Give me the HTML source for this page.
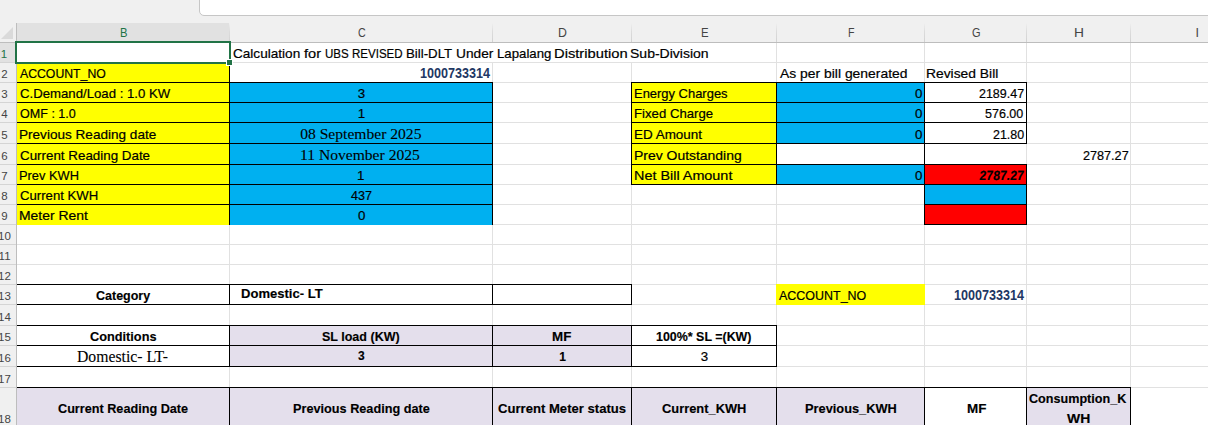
<!DOCTYPE html><html><head><meta charset='utf-8'><style>
html,body{margin:0;padding:0;}body{width:1208px;height:425px;position:relative;overflow:hidden;background:#f0f0f0;font-family:"Liberation Sans", sans-serif;}
.a{position:absolute;}.t{position:absolute;white-space:pre;transform-origin:0 0;}
</style></head><body>
<div class='a' style='left:199px;top:-10px;width:1100px;height:26px;background:#fff;border:1px solid #c6c6c6;border-radius:5px;box-sizing:border-box;'></div>
<div class='a' style='left:0;top:23px;width:1208px;height:19px;background:#f0f0f0'></div>
<div class='a' style='left:17px;top:23px;width:212px;height:18px;background:#e1e1e1'></div>
<div class='a' style='left:16px;top:23px;width:1px;height:19px;background:linear-gradient(#f0f0f0,#dcdcdc 45%,#d2d2d2)'></div>
<div class='a' style='left:229px;top:23px;width:1px;height:19px;background:linear-gradient(#f0f0f0,#dcdcdc 45%,#d2d2d2)'></div>
<div class='a' style='left:492px;top:23px;width:1px;height:19px;background:linear-gradient(#f0f0f0,#dcdcdc 45%,#d2d2d2)'></div>
<div class='a' style='left:631px;top:23px;width:1px;height:19px;background:linear-gradient(#f0f0f0,#dcdcdc 45%,#d2d2d2)'></div>
<div class='a' style='left:776px;top:23px;width:1px;height:19px;background:linear-gradient(#f0f0f0,#dcdcdc 45%,#d2d2d2)'></div>
<div class='a' style='left:924px;top:23px;width:1px;height:19px;background:linear-gradient(#f0f0f0,#dcdcdc 45%,#d2d2d2)'></div>
<div class='a' style='left:1026px;top:23px;width:1px;height:19px;background:linear-gradient(#f0f0f0,#dcdcdc 45%,#d2d2d2)'></div>
<div class='a' style='left:1130px;top:23px;width:1px;height:19px;background:linear-gradient(#f0f0f0,#dcdcdc 45%,#d2d2d2)'></div>
<div class='a' style='left:0;top:42px;width:1208px;height:1px;background:#bdbdbd'></div>
<svg class='a' style='left:0;top:23px' width='16' height='19'><polygon points='13,4 13,16 1,16' fill='#dadada'/></svg>
<div class='a' style='left:0;top:43px;width:16px;height:400px;background:#f0f0f0'></div>
<div class='a' style='left:0;top:43px;width:16px;height:19px;background:#e1e1e1'></div>
<div class='a' style='left:0;top:62px;width:16px;height:1px;background:#d4d4d4'></div>
<div class='a' style='left:0;top:82px;width:16px;height:1px;background:#d4d4d4'></div>
<div class='a' style='left:0;top:102px;width:16px;height:1px;background:#d4d4d4'></div>
<div class='a' style='left:0;top:122px;width:16px;height:1px;background:#d4d4d4'></div>
<div class='a' style='left:0;top:143px;width:16px;height:1px;background:#d4d4d4'></div>
<div class='a' style='left:0;top:164px;width:16px;height:1px;background:#d4d4d4'></div>
<div class='a' style='left:0;top:184px;width:16px;height:1px;background:#d4d4d4'></div>
<div class='a' style='left:0;top:204px;width:16px;height:1px;background:#d4d4d4'></div>
<div class='a' style='left:0;top:224px;width:16px;height:1px;background:#d4d4d4'></div>
<div class='a' style='left:0;top:244px;width:16px;height:1px;background:#d4d4d4'></div>
<div class='a' style='left:0;top:264px;width:16px;height:1px;background:#d4d4d4'></div>
<div class='a' style='left:0;top:284px;width:16px;height:1px;background:#d4d4d4'></div>
<div class='a' style='left:0;top:304px;width:16px;height:1px;background:#d4d4d4'></div>
<div class='a' style='left:0;top:325px;width:16px;height:1px;background:#d4d4d4'></div>
<div class='a' style='left:0;top:345px;width:16px;height:1px;background:#d4d4d4'></div>
<div class='a' style='left:0;top:366px;width:16px;height:1px;background:#d4d4d4'></div>
<div class='a' style='left:0;top:387px;width:16px;height:1px;background:#d4d4d4'></div>
<div class='a' style='left:16px;top:23px;width:1px;height:402px;background:#bdbdbd'></div>
<div class='a' style='left:17px;top:43px;width:1191px;height:382px;background:#fff'></div>
<div class='a' style='left:229px;top:43px;width:1px;height:382px;background:#e1e1e1'></div>
<div class='a' style='left:492px;top:43px;width:1px;height:382px;background:#e1e1e1'></div>
<div class='a' style='left:631px;top:43px;width:1px;height:382px;background:#e1e1e1'></div>
<div class='a' style='left:776px;top:43px;width:1px;height:382px;background:#e1e1e1'></div>
<div class='a' style='left:924px;top:43px;width:1px;height:382px;background:#e1e1e1'></div>
<div class='a' style='left:1026px;top:43px;width:1px;height:382px;background:#e1e1e1'></div>
<div class='a' style='left:1130px;top:43px;width:1px;height:382px;background:#e1e1e1'></div>
<div class='a' style='left:17px;top:62px;width:1191px;height:1px;background:#e1e1e1'></div>
<div class='a' style='left:17px;top:82px;width:1191px;height:1px;background:#e1e1e1'></div>
<div class='a' style='left:17px;top:102px;width:1191px;height:1px;background:#e1e1e1'></div>
<div class='a' style='left:17px;top:122px;width:1191px;height:1px;background:#e1e1e1'></div>
<div class='a' style='left:17px;top:143px;width:1191px;height:1px;background:#e1e1e1'></div>
<div class='a' style='left:17px;top:164px;width:1191px;height:1px;background:#e1e1e1'></div>
<div class='a' style='left:17px;top:184px;width:1191px;height:1px;background:#e1e1e1'></div>
<div class='a' style='left:17px;top:204px;width:1191px;height:1px;background:#e1e1e1'></div>
<div class='a' style='left:17px;top:224px;width:1191px;height:1px;background:#e1e1e1'></div>
<div class='a' style='left:17px;top:244px;width:1191px;height:1px;background:#e1e1e1'></div>
<div class='a' style='left:17px;top:264px;width:1191px;height:1px;background:#e1e1e1'></div>
<div class='a' style='left:17px;top:284px;width:1191px;height:1px;background:#e1e1e1'></div>
<div class='a' style='left:17px;top:304px;width:1191px;height:1px;background:#e1e1e1'></div>
<div class='a' style='left:17px;top:325px;width:1191px;height:1px;background:#e1e1e1'></div>
<div class='a' style='left:17px;top:345px;width:1191px;height:1px;background:#e1e1e1'></div>
<div class='a' style='left:17px;top:366px;width:1191px;height:1px;background:#e1e1e1'></div>
<div class='a' style='left:17px;top:387px;width:1191px;height:1px;background:#e1e1e1'></div>
<div class='a' style='left:492px;top:43px;width:1px;height:19px;background:#fff'></div>
<div class='a' style='left:631px;top:43px;width:1px;height:19px;background:#fff'></div>
<div class='a' style='left:17px;top:62px;width:213px;height:163px;background:#ffff00'></div>
<div class='a' style='left:229px;top:82px;width:264px;height:143px;background:#00b0f0'></div>
<div class='a' style='left:631px;top:82px;width:146px;height:103px;background:#ffff00'></div>
<div class='a' style='left:776px;top:82px;width:149px;height:62px;background:#00b0f0'></div>
<div class='a' style='left:776px;top:164px;width:149px;height:21px;background:#00b0f0'></div>
<div class='a' style='left:924px;top:164px;width:103px;height:21px;background:#ff0000'></div>
<div class='a' style='left:924px;top:184px;width:103px;height:21px;background:#00b0f0'></div>
<div class='a' style='left:924px;top:204px;width:103px;height:21px;background:#ff0000'></div>
<div class='a' style='left:776px;top:284px;width:149px;height:21px;background:#ffff00'></div>
<div class='a' style='left:229px;top:325px;width:403px;height:42px;background:#e4dfec'></div>
<div class='a' style='left:17px;top:387px;width:908px;height:54px;background:#e4dfec'></div>
<div class='a' style='left:1026px;top:387px;width:105px;height:54px;background:#e4dfec'></div>
<div class='a' style='left:17px;top:82px;width:476px;height:1px;background:#000'></div>
<div class='a' style='left:17px;top:102px;width:476px;height:1px;background:#000'></div>
<div class='a' style='left:17px;top:122px;width:476px;height:1px;background:#000'></div>
<div class='a' style='left:17px;top:143px;width:476px;height:1px;background:#000'></div>
<div class='a' style='left:17px;top:164px;width:476px;height:1px;background:#000'></div>
<div class='a' style='left:17px;top:184px;width:476px;height:1px;background:#000'></div>
<div class='a' style='left:17px;top:204px;width:476px;height:1px;background:#000'></div>
<div class='a' style='left:229px;top:62px;width:1px;height:163px;background:#000'></div>
<div class='a' style='left:492px;top:82px;width:1px;height:143px;background:#000'></div>
<div class='a' style='left:631px;top:82px;width:294px;height:1px;background:#000'></div>
<div class='a' style='left:631px;top:184px;width:294px;height:1px;background:#000'></div>
<div class='a' style='left:631px;top:82px;width:1px;height:103px;background:#000'></div>
<div class='a' style='left:924px;top:82px;width:1px;height:103px;background:#000'></div>
<div class='a' style='left:776px;top:82px;width:1px;height:103px;background:#000'></div>
<div class='a' style='left:631px;top:102px;width:294px;height:1px;background:#000'></div>
<div class='a' style='left:631px;top:122px;width:294px;height:1px;background:#000'></div>
<div class='a' style='left:631px;top:143px;width:294px;height:1px;background:#000'></div>
<div class='a' style='left:631px;top:164px;width:294px;height:1px;background:#000'></div>
<div class='a' style='left:924px;top:82px;width:103px;height:1px;background:#000'></div>
<div class='a' style='left:924px;top:143px;width:103px;height:1px;background:#000'></div>
<div class='a' style='left:924px;top:82px;width:1px;height:62px;background:#000'></div>
<div class='a' style='left:1026px;top:82px;width:1px;height:62px;background:#000'></div>
<div class='a' style='left:924px;top:102px;width:103px;height:1px;background:#000'></div>
<div class='a' style='left:924px;top:122px;width:103px;height:1px;background:#000'></div>
<div class='a' style='left:924px;top:143px;width:1px;height:22px;background:#000'></div>
<div class='a' style='left:924px;top:164px;width:103px;height:1px;background:#000'></div>
<div class='a' style='left:924px;top:224px;width:103px;height:1px;background:#000'></div>
<div class='a' style='left:924px;top:164px;width:1px;height:61px;background:#000'></div>
<div class='a' style='left:1026px;top:164px;width:1px;height:61px;background:#000'></div>
<div class='a' style='left:924px;top:184px;width:103px;height:1px;background:#000'></div>
<div class='a' style='left:924px;top:204px;width:103px;height:1px;background:#000'></div>
<div class='a' style='left:17px;top:284px;width:615px;height:1px;background:#000'></div>
<div class='a' style='left:17px;top:304px;width:615px;height:1px;background:#000'></div>
<div class='a' style='left:631px;top:284px;width:1px;height:21px;background:#000'></div>
<div class='a' style='left:229px;top:284px;width:1px;height:21px;background:#000'></div>
<div class='a' style='left:492px;top:284px;width:1px;height:21px;background:#000'></div>
<div class='a' style='left:17px;top:325px;width:760px;height:1px;background:#000'></div>
<div class='a' style='left:17px;top:366px;width:760px;height:1px;background:#000'></div>
<div class='a' style='left:776px;top:325px;width:1px;height:42px;background:#000'></div>
<div class='a' style='left:229px;top:325px;width:1px;height:42px;background:#000'></div>
<div class='a' style='left:492px;top:325px;width:1px;height:42px;background:#000'></div>
<div class='a' style='left:631px;top:325px;width:1px;height:42px;background:#000'></div>
<div class='a' style='left:17px;top:345px;width:760px;height:1px;background:#000'></div>
<div class='a' style='left:17px;top:387px;width:1114px;height:1px;background:#000'></div>
<div class='a' style='left:17px;top:440px;width:1114px;height:1px;background:#000'></div>
<div class='a' style='left:1130px;top:387px;width:1px;height:54px;background:#000'></div>
<div class='a' style='left:229px;top:387px;width:1px;height:54px;background:#000'></div>
<div class='a' style='left:492px;top:387px;width:1px;height:54px;background:#000'></div>
<div class='a' style='left:631px;top:387px;width:1px;height:54px;background:#000'></div>
<div class='a' style='left:776px;top:387px;width:1px;height:54px;background:#000'></div>
<div class='a' style='left:924px;top:387px;width:1px;height:54px;background:#000'></div>
<div class='a' style='left:1026px;top:387px;width:1px;height:54px;background:#000'></div>
<div class='a' style='left:15px;top:41px;width:216px;height:23px;border:2px solid #217346;box-sizing:border-box'></div>
<div class='a' style='left:227px;top:60px;width:5px;height:5px;background:#217346;border:1px solid #fff;box-sizing:content-box;margin:-1px'></div>
<div class='t' style='left:119.60px;top:25.00px;font-family:"Liberation Sans", sans-serif;font-size:12.5px;font-weight:400;font-style:normal;line-height:16px;white-space:pre;color:#217346;transform:scaleX(0.9000);'>B</div>
<div class='t' style='left:357.60px;top:25.00px;font-family:"Liberation Sans", sans-serif;font-size:12.5px;font-weight:400;font-style:normal;line-height:16px;white-space:pre;color:#444444;transform:scaleX(0.8556);'>C</div>
<div class='t' style='left:557.61px;top:25.00px;font-family:"Liberation Sans", sans-serif;font-size:12.5px;font-weight:400;font-style:normal;line-height:16px;white-space:pre;color:#444444;transform:scaleX(0.9875);'>D</div>
<div class='t' style='left:700.79px;top:25.00px;font-family:"Liberation Sans", sans-serif;font-size:12.5px;font-weight:400;font-style:normal;line-height:16px;white-space:pre;color:#444444;transform:scaleX(0.9143);'>E</div>
<div class='t' style='left:847.75px;top:25.00px;font-family:"Liberation Sans", sans-serif;font-size:12.5px;font-weight:400;font-style:normal;line-height:16px;white-space:pre;color:#444444;transform:scaleX(0.8500);'>F</div>
<div class='t' style='left:971.80px;top:25.00px;font-family:"Liberation Sans", sans-serif;font-size:12.5px;font-weight:400;font-style:normal;line-height:16px;white-space:pre;color:#444444;transform:scaleX(0.8778);'>G</div>
<div class='t' style='left:1073.60px;top:25.00px;font-family:"Liberation Sans", sans-serif;font-size:12.5px;font-weight:400;font-style:normal;line-height:16px;white-space:pre;color:#444444;transform:scaleX(1.1000);'>H</div>
<div class='t' style='left:1195.55px;top:25.00px;font-family:"Liberation Sans", sans-serif;font-size:12.5px;font-weight:400;font-style:normal;line-height:16px;white-space:pre;color:#444444;'>I</div>
<div class='t' style='left:0.70px;top:46.80px;font-family:"Liberation Sans", sans-serif;font-size:11.5px;font-weight:400;font-style:normal;line-height:15px;white-space:pre;color:#217346;'>1</div>
<div class='t' style='left:1.20px;top:66.60px;font-family:"Liberation Sans", sans-serif;font-size:11.5px;font-weight:400;font-style:normal;line-height:15px;white-space:pre;color:#444444;'>2</div>
<div class='t' style='left:1.20px;top:86.70px;font-family:"Liberation Sans", sans-serif;font-size:11.5px;font-weight:400;font-style:normal;line-height:15px;white-space:pre;color:#444444;'>3</div>
<div class='t' style='left:1.20px;top:106.70px;font-family:"Liberation Sans", sans-serif;font-size:11.5px;font-weight:400;font-style:normal;line-height:15px;white-space:pre;color:#444444;'>4</div>
<div class='t' style='left:1.20px;top:127.70px;font-family:"Liberation Sans", sans-serif;font-size:11.5px;font-weight:400;font-style:normal;line-height:15px;white-space:pre;color:#444444;'>5</div>
<div class='t' style='left:1.20px;top:148.70px;font-family:"Liberation Sans", sans-serif;font-size:11.5px;font-weight:400;font-style:normal;line-height:15px;white-space:pre;color:#444444;'>6</div>
<div class='t' style='left:1.20px;top:168.70px;font-family:"Liberation Sans", sans-serif;font-size:11.5px;font-weight:400;font-style:normal;line-height:15px;white-space:pre;color:#444444;'>7</div>
<div class='t' style='left:1.20px;top:188.70px;font-family:"Liberation Sans", sans-serif;font-size:11.5px;font-weight:400;font-style:normal;line-height:15px;white-space:pre;color:#444444;'>8</div>
<div class='t' style='left:1.20px;top:208.70px;font-family:"Liberation Sans", sans-serif;font-size:11.5px;font-weight:400;font-style:normal;line-height:15px;white-space:pre;color:#444444;'>9</div>
<div class='t' style='left:-1.90px;top:228.70px;font-family:"Liberation Sans", sans-serif;font-size:11.5px;font-weight:400;font-style:normal;line-height:15px;white-space:pre;color:#444444;'>10</div>
<div class='t' style='left:-1.40px;top:248.70px;font-family:"Liberation Sans", sans-serif;font-size:11.5px;font-weight:400;font-style:normal;line-height:15px;white-space:pre;color:#444444;'>11</div>
<div class='t' style='left:-1.90px;top:268.70px;font-family:"Liberation Sans", sans-serif;font-size:11.5px;font-weight:400;font-style:normal;line-height:15px;white-space:pre;color:#444444;'>12</div>
<div class='t' style='left:-1.90px;top:288.70px;font-family:"Liberation Sans", sans-serif;font-size:11.5px;font-weight:400;font-style:normal;line-height:15px;white-space:pre;color:#444444;'>13</div>
<div class='t' style='left:-1.90px;top:309.70px;font-family:"Liberation Sans", sans-serif;font-size:11.5px;font-weight:400;font-style:normal;line-height:15px;white-space:pre;color:#444444;'>14</div>
<div class='t' style='left:-1.90px;top:329.70px;font-family:"Liberation Sans", sans-serif;font-size:11.5px;font-weight:400;font-style:normal;line-height:15px;white-space:pre;color:#444444;'>15</div>
<div class='t' style='left:-1.90px;top:350.70px;font-family:"Liberation Sans", sans-serif;font-size:11.5px;font-weight:400;font-style:normal;line-height:15px;white-space:pre;color:#444444;'>16</div>
<div class='t' style='left:-1.90px;top:371.70px;font-family:"Liberation Sans", sans-serif;font-size:11.5px;font-weight:400;font-style:normal;line-height:15px;white-space:pre;color:#444444;'>17</div>
<div class='t' style='left:-1.90px;top:412.00px;font-family:"Liberation Sans", sans-serif;font-size:11.5px;font-weight:400;font-style:normal;line-height:15px;white-space:pre;color:#444444;'>18</div>
<div class='t' style='left:232.70px;top:45.00px;font-family:"Liberation Sans", sans-serif;font-size:13.3px;font-weight:400;font-style:normal;line-height:17px;white-space:pre;-webkit-text-stroke:0.2px #000;color:#000;transform:scaleX(1.0212);'>Calculation</div>
<div class='t' style='left:304.20px;top:45.00px;font-family:"Liberation Sans", sans-serif;font-size:13.3px;font-weight:400;font-style:normal;line-height:17px;white-space:pre;-webkit-text-stroke:0.2px #000;color:#000;transform:scaleX(1.0938);'>for</div>
<div class='t' style='left:324.73px;top:45.00px;font-family:"Liberation Sans", sans-serif;font-size:13.3px;font-weight:400;font-style:normal;line-height:17px;white-space:pre;-webkit-text-stroke:0.2px #000;color:#000;transform:scaleX(0.8692);'>UBS</div>
<div class='t' style='left:352.03px;top:45.00px;font-family:"Liberation Sans", sans-serif;font-size:13.3px;font-weight:400;font-style:normal;line-height:17px;white-space:pre;-webkit-text-stroke:0.2px #000;color:#000;transform:scaleX(0.8667);'>REVISED</div>
<div class='t' style='left:406.20px;top:45.00px;font-family:"Liberation Sans", sans-serif;font-size:13.3px;font-weight:400;font-style:normal;line-height:17px;white-space:pre;-webkit-text-stroke:0.2px #000;color:#000;transform:scaleX(0.9957);'>Bill-DLT</div>
<div class='t' style='left:455.77px;top:45.00px;font-family:"Liberation Sans", sans-serif;font-size:13.3px;font-weight:400;font-style:normal;line-height:17px;white-space:pre;-webkit-text-stroke:0.2px #000;color:#000;transform:scaleX(1.0306);'>Under</div>
<div class='t' style='left:496.91px;top:45.00px;font-family:"Liberation Sans", sans-serif;font-size:13.3px;font-weight:400;font-style:normal;line-height:17px;white-space:pre;-webkit-text-stroke:0.2px #000;color:#000;transform:scaleX(0.9943);'>Lapalang</div>
<div class='t' style='left:553.79px;top:45.00px;font-family:"Liberation Sans", sans-serif;font-size:13.3px;font-weight:400;font-style:normal;line-height:17px;white-space:pre;-webkit-text-stroke:0.2px #000;color:#000;transform:scaleX(1.1077);'>Distribution</div>
<div class='t' style='left:630.45px;top:45.00px;font-family:"Liberation Sans", sans-serif;font-size:13.3px;font-weight:400;font-style:normal;line-height:17px;white-space:pre;-webkit-text-stroke:0.2px #000;color:#000;transform:scaleX(1.0534);'>Sub-Division</div>
<div class='t' style='left:20.30px;top:65.00px;font-family:"Liberation Sans", sans-serif;font-size:13.3px;font-weight:400;font-style:normal;line-height:17px;white-space:pre;-webkit-text-stroke:0.2px #000;color:#000;transform:scaleX(0.9215);'>ACCOUNT_NO</div>
<div class='t' style='left:419.90px;top:64.00px;font-family:"Liberation Sans", sans-serif;font-size:14px;font-weight:700;font-style:normal;line-height:18px;white-space:pre;color:#1f3864;transform:scaleX(0.9000);'>1000733314</div>
<div class='t' style='left:779.50px;top:65.00px;font-family:"Liberation Sans", sans-serif;font-size:13.3px;font-weight:400;font-style:normal;line-height:17px;white-space:pre;-webkit-text-stroke:0.2px #000;color:#000;transform:scaleX(1.0451);'>As per bill generated</div>
<div class='t' style='left:926.36px;top:65.00px;font-family:"Liberation Sans", sans-serif;font-size:13.3px;font-weight:400;font-style:normal;line-height:17px;white-space:pre;-webkit-text-stroke:0.2px #000;color:#000;transform:scaleX(1.0412);'>Revised Bill</div>
<div class='t' style='left:20.30px;top:85.00px;font-family:"Liberation Sans", sans-serif;font-size:13.3px;font-weight:400;font-style:normal;line-height:17px;white-space:pre;-webkit-text-stroke:0.2px #000;color:#000;transform:scaleX(0.9914);'>C.Demand/Load : 1.0 KW</div>
<div class='t' style='left:357.85px;top:85.00px;font-family:"Liberation Sans", sans-serif;font-size:13.3px;font-weight:400;font-style:normal;line-height:17px;white-space:pre;-webkit-text-stroke:0.2px #000;color:#000;'>3</div>
<div class='t' style='left:633.93px;top:85.00px;font-family:"Liberation Sans", sans-serif;font-size:13.3px;font-weight:400;font-style:normal;line-height:17px;white-space:pre;-webkit-text-stroke:0.2px #000;color:#000;transform:scaleX(0.9737);'>Energy Charges</div>
<div class='t' style='left:915.05px;top:85.00px;font-family:"Liberation Sans", sans-serif;font-size:13.3px;font-weight:400;font-style:normal;line-height:17px;white-space:pre;-webkit-text-stroke:0.2px #000;color:#000;'>0</div>
<div class='t' style='left:978.60px;top:85.00px;font-family:"Liberation Sans", sans-serif;font-size:13.3px;font-weight:400;font-style:normal;line-height:17px;white-space:pre;-webkit-text-stroke:0.2px #000;color:#000;transform:scaleX(0.9375);'>2189.47</div>
<div class='t' style='left:20.30px;top:105.00px;font-family:"Liberation Sans", sans-serif;font-size:13.3px;font-weight:400;font-style:normal;line-height:17px;white-space:pre;-webkit-text-stroke:0.2px #000;color:#000;transform:scaleX(0.9441);'>OMF : 1.0</div>
<div class='t' style='left:357.65px;top:105.00px;font-family:"Liberation Sans", sans-serif;font-size:13.3px;font-weight:400;font-style:normal;line-height:17px;white-space:pre;-webkit-text-stroke:0.2px #000;color:#000;'>1</div>
<div class='t' style='left:633.91px;top:105.00px;font-family:"Liberation Sans", sans-serif;font-size:13.3px;font-weight:400;font-style:normal;line-height:17px;white-space:pre;-webkit-text-stroke:0.2px #000;color:#000;transform:scaleX(0.9911);'>Fixed Charge</div>
<div class='t' style='left:915.05px;top:105.00px;font-family:"Liberation Sans", sans-serif;font-size:13.3px;font-weight:400;font-style:normal;line-height:17px;white-space:pre;-webkit-text-stroke:0.2px #000;color:#000;'>0</div>
<div class='t' style='left:985.00px;top:105.00px;font-family:"Liberation Sans", sans-serif;font-size:13.3px;font-weight:400;font-style:normal;line-height:17px;white-space:pre;-webkit-text-stroke:0.2px #000;color:#000;transform:scaleX(0.9415);'>576.00</div>
<div class='t' style='left:19.28px;top:126.00px;font-family:"Liberation Sans", sans-serif;font-size:13.3px;font-weight:400;font-style:normal;line-height:17px;white-space:pre;-webkit-text-stroke:0.2px #000;color:#000;transform:scaleX(1.0201);'>Previous Reading date</div>
<div class='t' style='left:300.20px;top:123.70px;font-family:"Liberation Serif", serif;font-size:15.6px;font-weight:400;font-style:normal;line-height:20px;white-space:pre;-webkit-text-stroke:0.1px #000;color:#000;'>08 September 2025</div>
<div class='t' style='left:633.89px;top:126.00px;font-family:"Liberation Sans", sans-serif;font-size:13.3px;font-weight:400;font-style:normal;line-height:17px;white-space:pre;-webkit-text-stroke:0.2px #000;color:#000;transform:scaleX(1.0119);'>ED Amount</div>
<div class='t' style='left:915.05px;top:126.00px;font-family:"Liberation Sans", sans-serif;font-size:13.3px;font-weight:400;font-style:normal;line-height:17px;white-space:pre;-webkit-text-stroke:0.2px #000;color:#000;'>0</div>
<div class='t' style='left:992.70px;top:126.00px;font-family:"Liberation Sans", sans-serif;font-size:13.3px;font-weight:400;font-style:normal;line-height:17px;white-space:pre;-webkit-text-stroke:0.2px #000;color:#000;transform:scaleX(0.9364);'>21.80</div>
<div class='t' style='left:20.30px;top:147.00px;font-family:"Liberation Sans", sans-serif;font-size:13.3px;font-weight:400;font-style:normal;line-height:17px;white-space:pre;-webkit-text-stroke:0.2px #000;color:#000;transform:scaleX(1.0054);'>Current Reading Date</div>
<div class='t' style='left:300.00px;top:144.70px;font-family:"Liberation Serif", serif;font-size:15.6px;font-weight:400;font-style:normal;line-height:20px;white-space:pre;-webkit-text-stroke:0.1px #000;color:#000;'>11 November 2025</div>
<div class='t' style='left:633.85px;top:147.00px;font-family:"Liberation Sans", sans-serif;font-size:13.3px;font-weight:400;font-style:normal;line-height:17px;white-space:pre;-webkit-text-stroke:0.2px #000;color:#000;transform:scaleX(1.0485);'>Prev Outstanding</div>
<div class='t' style='left:1082.50px;top:147.00px;font-family:"Liberation Sans", sans-serif;font-size:13.3px;font-weight:400;font-style:normal;line-height:17px;white-space:pre;-webkit-text-stroke:0.2px #000;color:#000;transform:scaleX(0.9500);'>2787.27</div>
<div class='t' style='left:19.33px;top:167.00px;font-family:"Liberation Sans", sans-serif;font-size:13.3px;font-weight:400;font-style:normal;line-height:17px;white-space:pre;-webkit-text-stroke:0.2px #000;color:#000;transform:scaleX(0.9672);'>Prev KWH</div>
<div class='t' style='left:357.10px;top:167.00px;font-family:"Liberation Sans", sans-serif;font-size:13.3px;font-weight:400;font-style:normal;line-height:17px;white-space:pre;-webkit-text-stroke:0.2px #000;color:#000;'>1</div>
<div class='t' style='left:633.82px;top:167.00px;font-family:"Liberation Sans", sans-serif;font-size:13.3px;font-weight:400;font-style:normal;line-height:17px;white-space:pre;-webkit-text-stroke:0.2px #000;color:#000;transform:scaleX(1.0822);'>Net Bill Amount</div>
<div class='t' style='left:915.05px;top:167.00px;font-family:"Liberation Sans", sans-serif;font-size:13.3px;font-weight:400;font-style:normal;line-height:17px;white-space:pre;-webkit-text-stroke:0.2px #000;color:#000;'>0</div>
<div class='t' style='left:978.60px;top:167.00px;font-family:"Liberation Sans", sans-serif;font-size:13.3px;font-weight:700;font-style:normal;line-height:17px;white-space:pre;-webkit-text-stroke:0.15px #000;color:#000;transform-origin:0 13px;transform:scaleX(0.9250) skewX(-7deg);'>2787.27</div>
<div class='t' style='left:20.30px;top:187.00px;font-family:"Liberation Sans", sans-serif;font-size:13.3px;font-weight:400;font-style:normal;line-height:17px;white-space:pre;-webkit-text-stroke:0.2px #000;color:#000;transform:scaleX(0.9899);'>Current KWH</div>
<div class='t' style='left:351.00px;top:187.00px;font-family:"Liberation Sans", sans-serif;font-size:13.3px;font-weight:400;font-style:normal;line-height:17px;white-space:pre;-webkit-text-stroke:0.2px #000;color:#000;transform:scaleX(0.9455);'>437</div>
<div class='t' style='left:19.25px;top:207.00px;font-family:"Liberation Sans", sans-serif;font-size:13.3px;font-weight:400;font-style:normal;line-height:17px;white-space:pre;-webkit-text-stroke:0.2px #000;color:#000;transform:scaleX(1.0477);'>Meter Rent</div>
<div class='t' style='left:357.90px;top:207.00px;font-family:"Liberation Sans", sans-serif;font-size:13.3px;font-weight:400;font-style:normal;line-height:17px;white-space:pre;-webkit-text-stroke:0.2px #000;color:#000;'>0</div>
<div class='t' style='left:95.50px;top:287.40px;font-family:"Liberation Sans", sans-serif;font-size:13.3px;font-weight:700;font-style:normal;line-height:17px;white-space:pre;-webkit-text-stroke:0.15px #000;color:#000;transform:scaleX(0.9397);'>Category</div>
<div class='t' style='left:241.40px;top:284.60px;font-family:"Liberation Sans", sans-serif;font-size:13.3px;font-weight:700;font-style:normal;line-height:17px;white-space:pre;-webkit-text-stroke:0.15px #000;color:#000;transform:scaleX(0.9807);'>Domestic- LT</div>
<div class='t' style='left:779.20px;top:286.50px;font-family:"Liberation Sans", sans-serif;font-size:13.3px;font-weight:400;font-style:normal;line-height:17px;white-space:pre;-webkit-text-stroke:0.2px #000;color:#000;transform:scaleX(0.9376);'>ACCOUNT_NO</div>
<div class='t' style='left:953.80px;top:286.00px;font-family:"Liberation Sans", sans-serif;font-size:14px;font-weight:700;font-style:normal;line-height:18px;white-space:pre;color:#1f3864;transform:scaleX(0.9000);'>1000733314</div>
<div class='t' style='left:89.70px;top:327.70px;font-family:"Liberation Sans", sans-serif;font-size:13.3px;font-weight:700;font-style:normal;line-height:17px;white-space:pre;-webkit-text-stroke:0.15px #000;color:#000;transform:scaleX(0.9580);'>Conditions</div>
<div class='t' style='left:322.00px;top:327.70px;font-family:"Liberation Sans", sans-serif;font-size:13.3px;font-weight:700;font-style:normal;line-height:17px;white-space:pre;-webkit-text-stroke:0.15px #000;color:#000;transform:scaleX(0.9415);'>SL load (KW)</div>
<div class='t' style='left:552.30px;top:327.70px;font-family:"Liberation Sans", sans-serif;font-size:13.3px;font-weight:700;font-style:normal;line-height:17px;white-space:pre;-webkit-text-stroke:0.15px #000;color:#000;transform:scaleX(1.0053);'>MF</div>
<div class='t' style='left:655.60px;top:327.70px;font-family:"Liberation Sans", sans-serif;font-size:13.3px;font-weight:700;font-style:normal;line-height:17px;white-space:pre;-webkit-text-stroke:0.15px #000;color:#000;transform:scaleX(0.9353);'>100%* SL =(KW)</div>
<div class='t' style='left:76.70px;top:346.00px;font-family:"Liberation Serif", serif;font-size:16px;font-weight:400;font-style:normal;line-height:21px;white-space:pre;-webkit-text-stroke:0.1px #000;color:#000;transform:scaleX(0.9826);'>Domestic- LT-</div>
<div class='t' style='left:358.00px;top:348.40px;font-family:"Liberation Sans", sans-serif;font-size:12px;font-weight:700;font-style:normal;line-height:16px;white-space:pre;-webkit-text-stroke:0.15px #000;color:#000;'>3</div>
<div class='t' style='left:559.30px;top:348.50px;font-family:"Liberation Sans", sans-serif;font-size:12px;font-weight:700;font-style:normal;line-height:16px;white-space:pre;-webkit-text-stroke:0.15px #000;color:#000;'>1</div>
<div class='t' style='left:700.65px;top:348.00px;font-family:"Liberation Sans", sans-serif;font-size:13.3px;font-weight:400;font-style:normal;line-height:17px;white-space:pre;-webkit-text-stroke:0.2px #000;color:#000;'>3</div>
<div class='t' style='left:57.70px;top:400.00px;font-family:"Liberation Sans", sans-serif;font-size:13.3px;font-weight:700;font-style:normal;line-height:17px;white-space:pre;-webkit-text-stroke:0.15px #000;color:#000;transform:scaleX(0.9518);'>Current Reading Date</div>
<div class='t' style='left:292.50px;top:400.00px;font-family:"Liberation Sans", sans-serif;font-size:13.3px;font-weight:700;font-style:normal;line-height:17px;white-space:pre;-webkit-text-stroke:0.15px #000;color:#000;transform:scaleX(0.9545);'>Previous Reading date</div>
<div class='t' style='left:498.40px;top:400.00px;font-family:"Liberation Sans", sans-serif;font-size:13.3px;font-weight:700;font-style:normal;line-height:17px;white-space:pre;-webkit-text-stroke:0.15px #000;color:#000;transform:scaleX(0.9854);'>Current Meter status</div>
<div class='t' style='left:662.40px;top:400.00px;font-family:"Liberation Sans", sans-serif;font-size:13.3px;font-weight:700;font-style:normal;line-height:17px;white-space:pre;-webkit-text-stroke:0.15px #000;color:#000;transform:scaleX(0.9678);'>Current_KWH</div>
<div class='t' style='left:805.00px;top:400.00px;font-family:"Liberation Sans", sans-serif;font-size:13.3px;font-weight:700;font-style:normal;line-height:17px;white-space:pre;-webkit-text-stroke:0.15px #000;color:#000;transform:scaleX(0.9632);'>Previous_KWH</div>
<div class='t' style='left:966.60px;top:400.00px;font-family:"Liberation Sans", sans-serif;font-size:13.3px;font-weight:700;font-style:normal;line-height:17px;white-space:pre;-webkit-text-stroke:0.15px #000;color:#000;transform:scaleX(1.0105);'>MF</div>
<div class='t' style='left:1029.40px;top:390.30px;font-family:"Liberation Sans", sans-serif;font-size:13.3px;font-weight:700;font-style:normal;line-height:17px;white-space:pre;-webkit-text-stroke:0.15px #000;color:#000;transform:scaleX(0.9476);'>Consumption_K</div>
<div class='t' style='left:1066.80px;top:410.00px;font-family:"Liberation Sans", sans-serif;font-size:13.3px;font-weight:700;font-style:normal;line-height:17px;white-space:pre;-webkit-text-stroke:0.15px #000;color:#000;transform:scaleX(1.0500);'>WH</div>
</body></html>
